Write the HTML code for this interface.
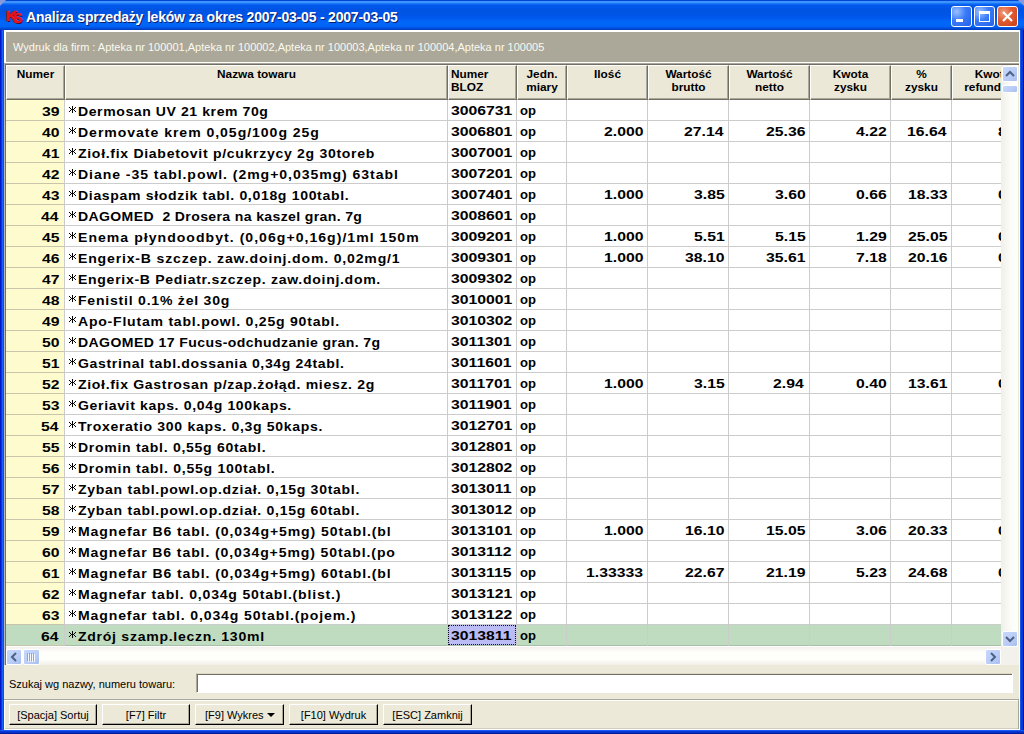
<!DOCTYPE html>
<html><head><meta charset="utf-8">
<style>
*{margin:0;padding:0;box-sizing:border-box}
html,body{width:1024px;height:734px;overflow:hidden;background:#0054E3}
body{position:relative;font-family:"Liberation Sans",sans-serif}
.a{position:absolute}
.t{position:absolute;white-space:pre}
.g{font-size:13px;font-weight:bold;color:#000;line-height:13px}
.gs{display:inline-block;transform:scaleX(1.2);transform-origin:0 0}
.gr{display:inline-block;transform:scaleX(1.2);transform-origin:100% 0}
.h{font-size:11px;font-weight:bold;color:#000;line-height:13px}
.n{font-size:11px;color:#000;line-height:13px}
</style></head><body>

<div class="a" style="left:0;top:0;width:1024px;height:30px;background:linear-gradient(to bottom,#0346D6 0px,#0346D6 1px,#3D95FF 1px,#3D95FF 2px,#3A93FF 2px,#3A93FF 3px,#1C76F8 3px,#1C76F8 4px,#0A64F0 4px,#0A64F0 5px,#0058EE 5px,#0058EE 6px,#0057EA 6px,#0057EA 7px,#0057EA 7px,#0057EA 8px,#0054E3 8px,#0054E3 9px,#0054E3 9px,#0054E3 10px,#0054E3 10px,#0054E3 11px,#0054E3 11px,#0054E3 12px,#0054E3 12px,#0054E3 13px,#0054E3 13px,#0054E3 14px,#0055E8 14px,#0055E8 15px,#0055E8 15px,#0055E8 16px,#0056EA 16px,#0056EA 17px,#0058EC 17px,#0058EC 18px,#005AEE 18px,#005AEE 19px,#005EF2 19px,#005EF2 20px,#0062F5 20px,#0062F5 21px,#0066F8 21px,#0066F8 22px,#0066F8 22px,#0066F8 23px,#0066F8 23px,#0066F8 24px,#0066F8 24px,#0066F8 25px,#0065F7 25px,#0065F7 26px,#0062F4 26px,#0062F4 27px,#0058E8 27px,#0058E8 28px,#004CD8 28px,#004CD8 29px,#003FC0 29px,#003FC0 30px)"></div>
<div class="a" style="left:0;top:30px;width:4px;height:704px;background:linear-gradient(to right,#0018C8 0,#0018C8 1px,#0838E0 1px,#0838E0 2px,#1A60F8 2px,#1A60F8 3px,#1050C8 3px)"></div>
<div class="a" style="left:1020px;top:30px;width:4px;height:704px;background:linear-gradient(to right,#1656E6 0,#1656E6 1px,#0838D8 1px,#0838D8 3px,#001090 3px)"></div>
<div class="a" style="left:0;top:730px;width:1024px;height:4px;background:linear-gradient(to bottom,#1A5AF0 0,#1A5AF0 1px,#0838D8 1px,#0838D8 2px,#0630C8 2px,#0630C8 3px,#001C9C 3px)"></div>
<div class="a" style="left:0;top:0;width:6px;height:6px;background:#8898DC;clip-path:polygon(0 0,100% 0,0 100%)"></div>
<div class="a" style="left:1018px;top:0;width:6px;height:6px;background:#8898DC;clip-path:polygon(0 0,100% 0,100% 100%)"></div>
<svg class="a" style="left:4px;top:8px" width="22" height="18"><g font-family="Liberation Sans" font-weight="bold" font-size="14" fill="#E8141B" stroke-linejoin="round"><g transform="translate(1,1)" fill="#1A0A30"><text x="1.5" y="12.5" transform="scale(1.15,1)">K</text><text x="9" y="14.5" transform="scale(1,1.05)">S</text></g><g stroke="#E8141B" stroke-width="0.7"><text x="1.5" y="12.5" transform="scale(1.15,1)">K</text><text x="9" y="14.5" transform="scale(1,1.05)">S</text></g></g></svg>
<div class="t" style="left:26px;top:9px;font:bold 14px/16px 'Liberation Sans',sans-serif;color:#fff;letter-spacing:-0.2px;text-shadow:1px 1px 0 #0A1E6E">Analiza sprzedaży leków za okres 2007-03-05 - 2007-03-05</div>
<div class="a" style="left:951px;top:6px;width:21px;height:21px;border:1px solid #fff;border-radius:3px;background:radial-gradient(circle at 25% 25%,#9CC0FF 0,#3A7BF8 45%,#2260E8 100%)">
<div class="a" style="left:4px;top:12px;width:7px;height:3px;background:#fff"></div>
</div>
<div class="a" style="left:974px;top:6px;width:21px;height:21px;border:1px solid #fff;border-radius:3px;background:radial-gradient(circle at 25% 25%,#9CC0FF 0,#3A7BF8 45%,#2260E8 100%)">
<div class="a" style="left:4px;top:4px;width:11px;height:11px;border:1px solid #fff;border-top:3px solid #fff"></div>
</div>
<div class="a" style="left:997px;top:6px;width:21px;height:21px;border:1px solid #fff;border-radius:3px;background:radial-gradient(circle at 30% 30%,#F0A080 0,#E25A30 45%,#C8401A 100%)">
<svg class="a" style="left:3px;top:3px" width="13" height="13"><path d="M2 2L11 11M11 2L2 11" stroke="#fff" stroke-width="2.2"/></svg>
</div>
<div class="a" style="left:4px;top:30px;width:1016px;height:700px;background:#ECE9D8"></div>
<div class="a" style="left:4px;top:30px;width:1016px;height:33px;background:#ACA899;border-top:2px solid #fff;border-left:2px solid #fff;border-bottom:1px solid #fff;border-right:1px solid #fff"></div>
<div class="t n" style="left:13px;top:41px;color:#FAFAF0">Wydruk dla firm : Apteka nr 100001,Apteka nr 100002,Apteka nr 100003,Apteka nr 100004,Apteka nr 100005</div>
<div class="a" style="left:4px;top:63px;width:1015px;height:602px;background:#fff;border-top:1px solid #ACA899;border-left:1px solid #B4B8C0"></div>
<div class="a" style="left:5px;top:64px;width:1014px;height:601px;border-top:1px solid #716F64;border-left:1px solid #716F64"></div>
<div class="a" style="left:6px;top:65px;width:995px;height:581px;overflow:hidden">
<div class="a" style="left:0px;top:0;width:59px;height:35px;background:#EBE8D8;border-top:1px solid #fff;border-left:1px solid #fff;border-right:1px solid #716F64;border-bottom:1px solid #716F64;box-shadow:inset -1px -1px 0 #ACA899"></div>
<div class="t h" style="left:0px;top:3px;width:59px;text-align:center;transform:scaleX(1.075)">Numer</div>
<div class="a" style="left:59px;top:0;width:383px;height:35px;background:#EBE8D8;border-top:1px solid #fff;border-left:1px solid #fff;border-right:1px solid #716F64;border-bottom:1px solid #716F64;box-shadow:inset -1px -1px 0 #ACA899"></div>
<div class="t h" style="left:59px;top:3px;width:383px;text-align:center;transform:scaleX(1.075)">Nazwa towaru</div>
<div class="a" style="left:442px;top:0;width:69px;height:35px;background:#EBE8D8;border-top:1px solid #fff;border-left:1px solid #fff;border-right:1px solid #716F64;border-bottom:1px solid #716F64;box-shadow:inset -1px -1px 0 #ACA899"></div>
<div class="t h" style="left:445px;top:3px;transform:scaleX(1.075);transform-origin:0 0">Numer<br>BLOZ</div>
<div class="a" style="left:511px;top:0;width:50px;height:35px;background:#EBE8D8;border-top:1px solid #fff;border-left:1px solid #fff;border-right:1px solid #716F64;border-bottom:1px solid #716F64;box-shadow:inset -1px -1px 0 #ACA899"></div>
<div class="t h" style="left:511px;top:3px;width:50px;text-align:center;transform:scaleX(1.075)">Jedn.<br>miary</div>
<div class="a" style="left:561px;top:0;width:81px;height:35px;background:#EBE8D8;border-top:1px solid #fff;border-left:1px solid #fff;border-right:1px solid #716F64;border-bottom:1px solid #716F64;box-shadow:inset -1px -1px 0 #ACA899"></div>
<div class="t h" style="left:561px;top:3px;width:81px;text-align:center;transform:scaleX(1.075)">Ilość</div>
<div class="a" style="left:642px;top:0;width:81px;height:35px;background:#EBE8D8;border-top:1px solid #fff;border-left:1px solid #fff;border-right:1px solid #716F64;border-bottom:1px solid #716F64;box-shadow:inset -1px -1px 0 #ACA899"></div>
<div class="t h" style="left:642px;top:3px;width:81px;text-align:center;transform:scaleX(1.075)">Wartość<br>brutto</div>
<div class="a" style="left:723px;top:0;width:81px;height:35px;background:#EBE8D8;border-top:1px solid #fff;border-left:1px solid #fff;border-right:1px solid #716F64;border-bottom:1px solid #716F64;box-shadow:inset -1px -1px 0 #ACA899"></div>
<div class="t h" style="left:723px;top:3px;width:81px;text-align:center;transform:scaleX(1.075)">Wartość<br>netto</div>
<div class="a" style="left:804px;top:0;width:81px;height:35px;background:#EBE8D8;border-top:1px solid #fff;border-left:1px solid #fff;border-right:1px solid #716F64;border-bottom:1px solid #716F64;box-shadow:inset -1px -1px 0 #ACA899"></div>
<div class="t h" style="left:804px;top:3px;width:81px;text-align:center;transform:scaleX(1.075)">Kwota<br>zysku</div>
<div class="a" style="left:885px;top:0;width:61px;height:35px;background:#EBE8D8;border-top:1px solid #fff;border-left:1px solid #fff;border-right:1px solid #716F64;border-bottom:1px solid #716F64;box-shadow:inset -1px -1px 0 #ACA899"></div>
<div class="t h" style="left:885px;top:3px;width:61px;text-align:center;transform:scaleX(1.075)">%<br>zysku</div>
<div class="a" style="left:946px;top:0;width:81px;height:35px;background:#EBE8D8;border-top:1px solid #fff;border-left:1px solid #fff;border-right:1px solid #716F64;border-bottom:1px solid #716F64;box-shadow:inset -1px -1px 0 #ACA899"></div>
<div class="t h" style="left:946px;top:3px;width:81px;text-align:center;transform:scaleX(1.075)">Kwota<br>refundacji</div>
<div class="a" style="left:0px;top:35px;width:58px;height:20px;background:#FEFCCE"></div>
<div class="a" style="left:59px;top:35px;width:1000px;height:20px;background:#fff"></div>
<div class="a" style="left:0px;top:55px;width:58px;height:1px;background:#C8C5AA"></div>
<div class="a" style="left:59px;top:55px;width:1000px;height:1px;background:#CCCCCC"></div>
<div class="t g" style="left:35.77px;top:40px;transform:scaleX(1.2108);transform-origin:0 0">39</div>
<div class="t g" style="left:72.00px;top:40px;letter-spacing:0.538px;transform:scaleX(1.0800);transform-origin:0 0">Dermosan UV 21 krem 70g</div>
<div class="t g" style="left:445.00px;top:39px;transform:scaleX(1.2108);transform-origin:0 0">3006731</div>
<div class="t g" style="left:514.00px;top:39px;transform:scaleX(1.0037);transform-origin:0 0">op</div>
<div class="a" style="left:0px;top:56px;width:58px;height:20px;background:#FEFCCE"></div>
<div class="a" style="left:59px;top:56px;width:1000px;height:20px;background:#fff"></div>
<div class="a" style="left:0px;top:76px;width:58px;height:1px;background:#C8C5AA"></div>
<div class="a" style="left:59px;top:76px;width:1000px;height:1px;background:#CCCCCC"></div>
<div class="t g" style="left:35.77px;top:61px;transform:scaleX(1.2108);transform-origin:0 0">40</div>
<div class="t g" style="left:72.00px;top:61px;letter-spacing:0.896px;transform:scaleX(1.0800);transform-origin:0 0">Dermovate krem 0,05g/100g 25g</div>
<div class="t g" style="left:445.00px;top:60px;transform:scaleX(1.2108);transform-origin:0 0">3006801</div>
<div class="t g" style="left:514.00px;top:60px;transform:scaleX(1.0037);transform-origin:0 0">op</div>
<div class="t g" style="left:597.89px;top:60px;transform:scaleX(1.2108);transform-origin:0 0">2.000</div>
<div class="t g" style="left:677.68px;top:60px;transform:scaleX(1.2108);transform-origin:0 0">27.14</div>
<div class="t g" style="left:759.89px;top:60px;transform:scaleX(1.2108);transform-origin:0 0">25.36</div>
<div class="t g" style="left:849.64px;top:60px;transform:scaleX(1.2108);transform-origin:0 0">4.22</div>
<div class="t g" style="left:900.68px;top:60px;transform:scaleX(1.2108);transform-origin:0 0">16.64</div>
<div class="t g" style="left:992.00px;top:60px;transform:scaleX(1.2108);transform-origin:0 0">8.00</div>
<div class="a" style="left:0px;top:77px;width:58px;height:20px;background:#FEFCCE"></div>
<div class="a" style="left:59px;top:77px;width:1000px;height:20px;background:#fff"></div>
<div class="a" style="left:0px;top:97px;width:58px;height:1px;background:#C8C5AA"></div>
<div class="a" style="left:59px;top:97px;width:1000px;height:1px;background:#CCCCCC"></div>
<div class="t g" style="left:35.77px;top:82px;transform:scaleX(1.2108);transform-origin:0 0">41</div>
<div class="t g" style="left:72.00px;top:82px;letter-spacing:0.647px;transform:scaleX(1.0800);transform-origin:0 0">Zioł.fix Diabetovit p/cukrzycy 2g 30toreb</div>
<div class="t g" style="left:445.00px;top:81px;transform:scaleX(1.2108);transform-origin:0 0">3007001</div>
<div class="t g" style="left:514.00px;top:81px;transform:scaleX(1.0037);transform-origin:0 0">op</div>
<div class="a" style="left:0px;top:98px;width:58px;height:20px;background:#FEFCCE"></div>
<div class="a" style="left:59px;top:98px;width:1000px;height:20px;background:#fff"></div>
<div class="a" style="left:0px;top:118px;width:58px;height:1px;background:#C8C5AA"></div>
<div class="a" style="left:59px;top:118px;width:1000px;height:1px;background:#CCCCCC"></div>
<div class="t g" style="left:35.77px;top:103px;transform:scaleX(1.2108);transform-origin:0 0">42</div>
<div class="t g" style="left:72.00px;top:103px;letter-spacing:0.875px;transform:scaleX(1.0800);transform-origin:0 0">Diane -35 tabl.powl. (2mg+0,035mg) 63tabl</div>
<div class="t g" style="left:445.00px;top:102px;transform:scaleX(1.2108);transform-origin:0 0">3007201</div>
<div class="t g" style="left:514.00px;top:102px;transform:scaleX(1.0037);transform-origin:0 0">op</div>
<div class="a" style="left:0px;top:119px;width:58px;height:20px;background:#FEFCCE"></div>
<div class="a" style="left:59px;top:119px;width:1000px;height:20px;background:#fff"></div>
<div class="a" style="left:0px;top:139px;width:58px;height:1px;background:#C8C5AA"></div>
<div class="a" style="left:59px;top:139px;width:1000px;height:1px;background:#CCCCCC"></div>
<div class="t g" style="left:35.77px;top:124px;transform:scaleX(1.2108);transform-origin:0 0">43</div>
<div class="t g" style="left:72.00px;top:124px;letter-spacing:0.619px;transform:scaleX(1.0800);transform-origin:0 0">Diaspam słodzik tabl. 0,018g 100tabl.</div>
<div class="t g" style="left:445.00px;top:123px;transform:scaleX(1.2108);transform-origin:0 0">3007401</div>
<div class="t g" style="left:514.00px;top:123px;transform:scaleX(1.0037);transform-origin:0 0">op</div>
<div class="t g" style="left:597.89px;top:123px;transform:scaleX(1.2108);transform-origin:0 0">1.000</div>
<div class="t g" style="left:687.64px;top:123px;transform:scaleX(1.2108);transform-origin:0 0">3.85</div>
<div class="t g" style="left:768.64px;top:123px;transform:scaleX(1.2108);transform-origin:0 0">3.60</div>
<div class="t g" style="left:849.64px;top:123px;transform:scaleX(1.2108);transform-origin:0 0">0.66</div>
<div class="t g" style="left:901.89px;top:123px;transform:scaleX(1.2108);transform-origin:0 0">18.33</div>
<div class="t g" style="left:992.00px;top:123px;transform:scaleX(1.2108);transform-origin:0 0">0.00</div>
<div class="a" style="left:0px;top:140px;width:58px;height:20px;background:#FEFCCE"></div>
<div class="a" style="left:59px;top:140px;width:1000px;height:20px;background:#fff"></div>
<div class="a" style="left:0px;top:160px;width:58px;height:1px;background:#C8C5AA"></div>
<div class="a" style="left:59px;top:160px;width:1000px;height:1px;background:#CCCCCC"></div>
<div class="t g" style="left:34.56px;top:145px;transform:scaleX(1.2108);transform-origin:0 0">44</div>
<div class="t g" style="left:72.00px;top:145px;letter-spacing:0.339px;transform:scaleX(1.0800);transform-origin:0 0">DAGOMED  2 Drosera na kaszel gran. 7g</div>
<div class="t g" style="left:445.00px;top:144px;transform:scaleX(1.2108);transform-origin:0 0">3008601</div>
<div class="t g" style="left:514.00px;top:144px;transform:scaleX(1.0037);transform-origin:0 0">op</div>
<div class="a" style="left:0px;top:161px;width:58px;height:20px;background:#FEFCCE"></div>
<div class="a" style="left:59px;top:161px;width:1000px;height:20px;background:#fff"></div>
<div class="a" style="left:0px;top:181px;width:58px;height:1px;background:#C8C5AA"></div>
<div class="a" style="left:59px;top:181px;width:1000px;height:1px;background:#CCCCCC"></div>
<div class="t g" style="left:35.77px;top:166px;transform:scaleX(1.2108);transform-origin:0 0">45</div>
<div class="t g" style="left:72.00px;top:166px;letter-spacing:0.958px;transform:scaleX(1.0800);transform-origin:0 0">Enema płyndoodbyt. (0,06g+0,16g)/1ml 150m</div>
<div class="t g" style="left:445.00px;top:165px;transform:scaleX(1.2108);transform-origin:0 0">3009201</div>
<div class="t g" style="left:514.00px;top:165px;transform:scaleX(1.0037);transform-origin:0 0">op</div>
<div class="t g" style="left:597.89px;top:165px;transform:scaleX(1.2108);transform-origin:0 0">1.000</div>
<div class="t g" style="left:687.64px;top:165px;transform:scaleX(1.2108);transform-origin:0 0">5.51</div>
<div class="t g" style="left:768.64px;top:165px;transform:scaleX(1.2108);transform-origin:0 0">5.15</div>
<div class="t g" style="left:849.64px;top:165px;transform:scaleX(1.2108);transform-origin:0 0">1.29</div>
<div class="t g" style="left:901.89px;top:165px;transform:scaleX(1.2108);transform-origin:0 0">25.05</div>
<div class="t g" style="left:992.00px;top:165px;transform:scaleX(1.2108);transform-origin:0 0">0.00</div>
<div class="a" style="left:0px;top:182px;width:58px;height:20px;background:#FEFCCE"></div>
<div class="a" style="left:59px;top:182px;width:1000px;height:20px;background:#fff"></div>
<div class="a" style="left:0px;top:202px;width:58px;height:1px;background:#C8C5AA"></div>
<div class="a" style="left:59px;top:202px;width:1000px;height:1px;background:#CCCCCC"></div>
<div class="t g" style="left:35.77px;top:187px;transform:scaleX(1.2108);transform-origin:0 0">46</div>
<div class="t g" style="left:72.00px;top:187px;letter-spacing:0.775px;transform:scaleX(1.0800);transform-origin:0 0">Engerix-B szczep. zaw.doinj.dom. 0,02mg/1</div>
<div class="t g" style="left:445.00px;top:186px;transform:scaleX(1.2108);transform-origin:0 0">3009301</div>
<div class="t g" style="left:514.00px;top:186px;transform:scaleX(1.0037);transform-origin:0 0">op</div>
<div class="t g" style="left:597.89px;top:186px;transform:scaleX(1.2108);transform-origin:0 0">1.000</div>
<div class="t g" style="left:678.89px;top:186px;transform:scaleX(1.2108);transform-origin:0 0">38.10</div>
<div class="t g" style="left:759.89px;top:186px;transform:scaleX(1.2108);transform-origin:0 0">35.61</div>
<div class="t g" style="left:849.64px;top:186px;transform:scaleX(1.2108);transform-origin:0 0">7.18</div>
<div class="t g" style="left:901.89px;top:186px;transform:scaleX(1.2108);transform-origin:0 0">20.16</div>
<div class="t g" style="left:992.00px;top:186px;transform:scaleX(1.2108);transform-origin:0 0">0.00</div>
<div class="a" style="left:0px;top:203px;width:58px;height:20px;background:#FEFCCE"></div>
<div class="a" style="left:59px;top:203px;width:1000px;height:20px;background:#fff"></div>
<div class="a" style="left:0px;top:223px;width:58px;height:1px;background:#C8C5AA"></div>
<div class="a" style="left:59px;top:223px;width:1000px;height:1px;background:#CCCCCC"></div>
<div class="t g" style="left:35.77px;top:208px;transform:scaleX(1.2108);transform-origin:0 0">47</div>
<div class="t g" style="left:72.00px;top:208px;letter-spacing:0.650px;transform:scaleX(1.0800);transform-origin:0 0">Engerix-B Pediatr.szczep. zaw.doinj.dom.</div>
<div class="t g" style="left:445.00px;top:207px;transform:scaleX(1.2108);transform-origin:0 0">3009302</div>
<div class="t g" style="left:514.00px;top:207px;transform:scaleX(1.0037);transform-origin:0 0">op</div>
<div class="a" style="left:0px;top:224px;width:58px;height:20px;background:#FEFCCE"></div>
<div class="a" style="left:59px;top:224px;width:1000px;height:20px;background:#fff"></div>
<div class="a" style="left:0px;top:244px;width:58px;height:1px;background:#C8C5AA"></div>
<div class="a" style="left:59px;top:244px;width:1000px;height:1px;background:#CCCCCC"></div>
<div class="t g" style="left:35.77px;top:229px;transform:scaleX(1.2108);transform-origin:0 0">48</div>
<div class="t g" style="left:72.00px;top:229px;letter-spacing:0.721px;transform:scaleX(1.0800);transform-origin:0 0">Fenistil 0.1% żel 30g</div>
<div class="t g" style="left:445.00px;top:228px;transform:scaleX(1.2108);transform-origin:0 0">3010001</div>
<div class="t g" style="left:514.00px;top:228px;transform:scaleX(1.0037);transform-origin:0 0">op</div>
<div class="a" style="left:0px;top:245px;width:58px;height:20px;background:#FEFCCE"></div>
<div class="a" style="left:59px;top:245px;width:1000px;height:20px;background:#fff"></div>
<div class="a" style="left:0px;top:265px;width:58px;height:1px;background:#C8C5AA"></div>
<div class="a" style="left:59px;top:265px;width:1000px;height:1px;background:#CCCCCC"></div>
<div class="t g" style="left:35.77px;top:250px;transform:scaleX(1.2108);transform-origin:0 0">49</div>
<div class="t g" style="left:72.00px;top:250px;letter-spacing:0.718px;transform:scaleX(1.0800);transform-origin:0 0">Apo-Flutam tabl.powl. 0,25g 90tabl.</div>
<div class="t g" style="left:445.00px;top:249px;transform:scaleX(1.2108);transform-origin:0 0">3010302</div>
<div class="t g" style="left:514.00px;top:249px;transform:scaleX(1.0037);transform-origin:0 0">op</div>
<div class="a" style="left:0px;top:266px;width:58px;height:20px;background:#FEFCCE"></div>
<div class="a" style="left:59px;top:266px;width:1000px;height:20px;background:#fff"></div>
<div class="a" style="left:0px;top:286px;width:58px;height:1px;background:#C8C5AA"></div>
<div class="a" style="left:59px;top:286px;width:1000px;height:1px;background:#CCCCCC"></div>
<div class="t g" style="left:35.77px;top:271px;transform:scaleX(1.2108);transform-origin:0 0">50</div>
<div class="t g" style="left:72.00px;top:271px;letter-spacing:0.387px;transform:scaleX(1.0800);transform-origin:0 0">DAGOMED 17 Fucus-odchudzanie gran. 7g</div>
<div class="t g" style="left:445.00px;top:270px;transform:scaleX(1.2108);transform-origin:0 0">3011301</div>
<div class="t g" style="left:514.00px;top:270px;transform:scaleX(1.0037);transform-origin:0 0">op</div>
<div class="a" style="left:0px;top:287px;width:58px;height:20px;background:#FEFCCE"></div>
<div class="a" style="left:59px;top:287px;width:1000px;height:20px;background:#fff"></div>
<div class="a" style="left:0px;top:307px;width:58px;height:1px;background:#C8C5AA"></div>
<div class="a" style="left:59px;top:307px;width:1000px;height:1px;background:#CCCCCC"></div>
<div class="t g" style="left:35.77px;top:292px;transform:scaleX(1.2108);transform-origin:0 0">51</div>
<div class="t g" style="left:72.00px;top:292px;letter-spacing:0.599px;transform:scaleX(1.0800);transform-origin:0 0">Gastrinal tabl.dossania 0,34g 24tabl.</div>
<div class="t g" style="left:445.00px;top:291px;transform:scaleX(1.2108);transform-origin:0 0">3011601</div>
<div class="t g" style="left:514.00px;top:291px;transform:scaleX(1.0037);transform-origin:0 0">op</div>
<div class="a" style="left:0px;top:308px;width:58px;height:20px;background:#FEFCCE"></div>
<div class="a" style="left:59px;top:308px;width:1000px;height:20px;background:#fff"></div>
<div class="a" style="left:0px;top:328px;width:58px;height:1px;background:#C8C5AA"></div>
<div class="a" style="left:59px;top:328px;width:1000px;height:1px;background:#CCCCCC"></div>
<div class="t g" style="left:35.77px;top:313px;transform:scaleX(1.2108);transform-origin:0 0">52</div>
<div class="t g" style="left:72.00px;top:313px;letter-spacing:0.629px;transform:scaleX(1.0800);transform-origin:0 0">Zioł.fix Gastrosan p/zap.żołąd. miesz. 2g</div>
<div class="t g" style="left:445.00px;top:312px;transform:scaleX(1.2108);transform-origin:0 0">3011701</div>
<div class="t g" style="left:514.00px;top:312px;transform:scaleX(1.0037);transform-origin:0 0">op</div>
<div class="t g" style="left:597.89px;top:312px;transform:scaleX(1.2108);transform-origin:0 0">1.000</div>
<div class="t g" style="left:687.64px;top:312px;transform:scaleX(1.2108);transform-origin:0 0">3.15</div>
<div class="t g" style="left:767.43px;top:312px;transform:scaleX(1.2108);transform-origin:0 0">2.94</div>
<div class="t g" style="left:849.64px;top:312px;transform:scaleX(1.2108);transform-origin:0 0">0.40</div>
<div class="t g" style="left:901.89px;top:312px;transform:scaleX(1.2108);transform-origin:0 0">13.61</div>
<div class="t g" style="left:992.00px;top:312px;transform:scaleX(1.2108);transform-origin:0 0">0.00</div>
<div class="a" style="left:0px;top:329px;width:58px;height:20px;background:#FEFCCE"></div>
<div class="a" style="left:59px;top:329px;width:1000px;height:20px;background:#fff"></div>
<div class="a" style="left:0px;top:349px;width:58px;height:1px;background:#C8C5AA"></div>
<div class="a" style="left:59px;top:349px;width:1000px;height:1px;background:#CCCCCC"></div>
<div class="t g" style="left:35.77px;top:334px;transform:scaleX(1.2108);transform-origin:0 0">53</div>
<div class="t g" style="left:72.00px;top:334px;letter-spacing:0.600px;transform:scaleX(1.0800);transform-origin:0 0">Geriavit kaps. 0,04g 100kaps.</div>
<div class="t g" style="left:445.00px;top:333px;transform:scaleX(1.2108);transform-origin:0 0">3011901</div>
<div class="t g" style="left:514.00px;top:333px;transform:scaleX(1.0037);transform-origin:0 0">op</div>
<div class="a" style="left:0px;top:350px;width:58px;height:20px;background:#FEFCCE"></div>
<div class="a" style="left:59px;top:350px;width:1000px;height:20px;background:#fff"></div>
<div class="a" style="left:0px;top:370px;width:58px;height:1px;background:#C8C5AA"></div>
<div class="a" style="left:59px;top:370px;width:1000px;height:1px;background:#CCCCCC"></div>
<div class="t g" style="left:34.56px;top:355px;transform:scaleX(1.2108);transform-origin:0 0">54</div>
<div class="t g" style="left:72.00px;top:355px;letter-spacing:0.638px;transform:scaleX(1.0800);transform-origin:0 0">Troxeratio 300 kaps. 0,3g 50kaps.</div>
<div class="t g" style="left:445.00px;top:354px;transform:scaleX(1.2108);transform-origin:0 0">3012701</div>
<div class="t g" style="left:514.00px;top:354px;transform:scaleX(1.0037);transform-origin:0 0">op</div>
<div class="a" style="left:0px;top:371px;width:58px;height:20px;background:#FEFCCE"></div>
<div class="a" style="left:59px;top:371px;width:1000px;height:20px;background:#fff"></div>
<div class="a" style="left:0px;top:391px;width:58px;height:1px;background:#C8C5AA"></div>
<div class="a" style="left:59px;top:391px;width:1000px;height:1px;background:#CCCCCC"></div>
<div class="t g" style="left:35.77px;top:376px;transform:scaleX(1.2108);transform-origin:0 0">55</div>
<div class="t g" style="left:72.00px;top:376px;letter-spacing:0.647px;transform:scaleX(1.0800);transform-origin:0 0">Dromin tabl. 0,55g 60tabl.</div>
<div class="t g" style="left:445.00px;top:375px;transform:scaleX(1.2108);transform-origin:0 0">3012801</div>
<div class="t g" style="left:514.00px;top:375px;transform:scaleX(1.0037);transform-origin:0 0">op</div>
<div class="a" style="left:0px;top:392px;width:58px;height:20px;background:#FEFCCE"></div>
<div class="a" style="left:59px;top:392px;width:1000px;height:20px;background:#fff"></div>
<div class="a" style="left:0px;top:412px;width:58px;height:1px;background:#C8C5AA"></div>
<div class="a" style="left:59px;top:412px;width:1000px;height:1px;background:#CCCCCC"></div>
<div class="t g" style="left:35.77px;top:397px;transform:scaleX(1.2108);transform-origin:0 0">56</div>
<div class="t g" style="left:72.00px;top:397px;letter-spacing:0.672px;transform:scaleX(1.0800);transform-origin:0 0">Dromin tabl. 0,55g 100tabl.</div>
<div class="t g" style="left:445.00px;top:396px;transform:scaleX(1.2108);transform-origin:0 0">3012802</div>
<div class="t g" style="left:514.00px;top:396px;transform:scaleX(1.0037);transform-origin:0 0">op</div>
<div class="a" style="left:0px;top:413px;width:58px;height:20px;background:#FEFCCE"></div>
<div class="a" style="left:59px;top:413px;width:1000px;height:20px;background:#fff"></div>
<div class="a" style="left:0px;top:433px;width:58px;height:1px;background:#C8C5AA"></div>
<div class="a" style="left:59px;top:433px;width:1000px;height:1px;background:#CCCCCC"></div>
<div class="t g" style="left:35.77px;top:418px;transform:scaleX(1.2108);transform-origin:0 0">57</div>
<div class="t g" style="left:72.00px;top:418px;letter-spacing:0.659px;transform:scaleX(1.0800);transform-origin:0 0">Zyban tabl.powl.op.dział. 0,15g 30tabl.</div>
<div class="t g" style="left:445.00px;top:417px;transform:scaleX(1.2108);transform-origin:0 0">3013011</div>
<div class="t g" style="left:514.00px;top:417px;transform:scaleX(1.0037);transform-origin:0 0">op</div>
<div class="a" style="left:0px;top:434px;width:58px;height:20px;background:#FEFCCE"></div>
<div class="a" style="left:59px;top:434px;width:1000px;height:20px;background:#fff"></div>
<div class="a" style="left:0px;top:454px;width:58px;height:1px;background:#C8C5AA"></div>
<div class="a" style="left:59px;top:454px;width:1000px;height:1px;background:#CCCCCC"></div>
<div class="t g" style="left:35.77px;top:439px;transform:scaleX(1.2108);transform-origin:0 0">58</div>
<div class="t g" style="left:72.00px;top:439px;letter-spacing:0.659px;transform:scaleX(1.0800);transform-origin:0 0">Zyban tabl.powl.op.dział. 0,15g 60tabl.</div>
<div class="t g" style="left:445.00px;top:438px;transform:scaleX(1.2108);transform-origin:0 0">3013012</div>
<div class="t g" style="left:514.00px;top:438px;transform:scaleX(1.0037);transform-origin:0 0">op</div>
<div class="a" style="left:0px;top:455px;width:58px;height:20px;background:#FEFCCE"></div>
<div class="a" style="left:59px;top:455px;width:1000px;height:20px;background:#fff"></div>
<div class="a" style="left:0px;top:475px;width:58px;height:1px;background:#C8C5AA"></div>
<div class="a" style="left:59px;top:475px;width:1000px;height:1px;background:#CCCCCC"></div>
<div class="t g" style="left:35.77px;top:460px;transform:scaleX(1.2108);transform-origin:0 0">59</div>
<div class="t g" style="left:72.00px;top:460px;letter-spacing:0.837px;transform:scaleX(1.0800);transform-origin:0 0">Magnefar B6 tabl. (0,034g+5mg) 50tabl.(bl</div>
<div class="t g" style="left:445.00px;top:459px;transform:scaleX(1.2108);transform-origin:0 0">3013101</div>
<div class="t g" style="left:514.00px;top:459px;transform:scaleX(1.0037);transform-origin:0 0">op</div>
<div class="t g" style="left:597.89px;top:459px;transform:scaleX(1.2108);transform-origin:0 0">1.000</div>
<div class="t g" style="left:678.89px;top:459px;transform:scaleX(1.2108);transform-origin:0 0">16.10</div>
<div class="t g" style="left:759.89px;top:459px;transform:scaleX(1.2108);transform-origin:0 0">15.05</div>
<div class="t g" style="left:849.64px;top:459px;transform:scaleX(1.2108);transform-origin:0 0">3.06</div>
<div class="t g" style="left:901.89px;top:459px;transform:scaleX(1.2108);transform-origin:0 0">20.33</div>
<div class="t g" style="left:992.00px;top:459px;transform:scaleX(1.2108);transform-origin:0 0">0.00</div>
<div class="a" style="left:0px;top:476px;width:58px;height:20px;background:#FEFCCE"></div>
<div class="a" style="left:59px;top:476px;width:1000px;height:20px;background:#fff"></div>
<div class="a" style="left:0px;top:496px;width:58px;height:1px;background:#C8C5AA"></div>
<div class="a" style="left:59px;top:496px;width:1000px;height:1px;background:#CCCCCC"></div>
<div class="t g" style="left:35.77px;top:481px;transform:scaleX(1.2108);transform-origin:0 0">60</div>
<div class="t g" style="left:72.00px;top:481px;letter-spacing:0.826px;transform:scaleX(1.0800);transform-origin:0 0">Magnefar B6 tabl. (0,034g+5mg) 50tabl.(po</div>
<div class="t g" style="left:445.00px;top:480px;transform:scaleX(1.2108);transform-origin:0 0">3013112</div>
<div class="t g" style="left:514.00px;top:480px;transform:scaleX(1.0037);transform-origin:0 0">op</div>
<div class="a" style="left:0px;top:497px;width:58px;height:20px;background:#FEFCCE"></div>
<div class="a" style="left:59px;top:497px;width:1000px;height:20px;background:#fff"></div>
<div class="a" style="left:0px;top:517px;width:58px;height:1px;background:#C8C5AA"></div>
<div class="a" style="left:59px;top:517px;width:1000px;height:1px;background:#CCCCCC"></div>
<div class="t g" style="left:35.77px;top:502px;transform:scaleX(1.2108);transform-origin:0 0">61</div>
<div class="t g" style="left:72.00px;top:502px;letter-spacing:0.837px;transform:scaleX(1.0800);transform-origin:0 0">Magnefar B6 tabl. (0,034g+5mg) 60tabl.(bl</div>
<div class="t g" style="left:445.00px;top:501px;transform:scaleX(1.2108);transform-origin:0 0">3013115</div>
<div class="t g" style="left:514.00px;top:501px;transform:scaleX(1.0037);transform-origin:0 0">op</div>
<div class="t g" style="left:580.38px;top:501px;transform:scaleX(1.2108);transform-origin:0 0">1.33333</div>
<div class="t g" style="left:678.89px;top:501px;transform:scaleX(1.2108);transform-origin:0 0">22.67</div>
<div class="t g" style="left:759.89px;top:501px;transform:scaleX(1.2108);transform-origin:0 0">21.19</div>
<div class="t g" style="left:849.64px;top:501px;transform:scaleX(1.2108);transform-origin:0 0">5.23</div>
<div class="t g" style="left:901.89px;top:501px;transform:scaleX(1.2108);transform-origin:0 0">24.68</div>
<div class="t g" style="left:992.00px;top:501px;transform:scaleX(1.2108);transform-origin:0 0">0.00</div>
<div class="a" style="left:0px;top:518px;width:58px;height:20px;background:#FEFCCE"></div>
<div class="a" style="left:59px;top:518px;width:1000px;height:20px;background:#fff"></div>
<div class="a" style="left:0px;top:538px;width:58px;height:1px;background:#C8C5AA"></div>
<div class="a" style="left:59px;top:538px;width:1000px;height:1px;background:#CCCCCC"></div>
<div class="t g" style="left:35.77px;top:523px;transform:scaleX(1.2108);transform-origin:0 0">62</div>
<div class="t g" style="left:72.00px;top:523px;letter-spacing:0.748px;transform:scaleX(1.0800);transform-origin:0 0">Magnefar tabl. 0,034g 50tabl.(blist.)</div>
<div class="t g" style="left:445.00px;top:522px;transform:scaleX(1.2108);transform-origin:0 0">3013121</div>
<div class="t g" style="left:514.00px;top:522px;transform:scaleX(1.0037);transform-origin:0 0">op</div>
<div class="a" style="left:0px;top:539px;width:58px;height:20px;background:#FEFCCE"></div>
<div class="a" style="left:59px;top:539px;width:1000px;height:20px;background:#fff"></div>
<div class="a" style="left:0px;top:559px;width:58px;height:1px;background:#C8C5AA"></div>
<div class="a" style="left:59px;top:559px;width:1000px;height:1px;background:#CCCCCC"></div>
<div class="t g" style="left:35.77px;top:544px;transform:scaleX(1.2108);transform-origin:0 0">63</div>
<div class="t g" style="left:72.00px;top:544px;letter-spacing:0.815px;transform:scaleX(1.0800);transform-origin:0 0">Magnefar tabl. 0,034g 50tabl.(pojem.)</div>
<div class="t g" style="left:445.00px;top:543px;transform:scaleX(1.2108);transform-origin:0 0">3013122</div>
<div class="t g" style="left:514.00px;top:543px;transform:scaleX(1.0037);transform-origin:0 0">op</div>
<div class="a" style="left:0px;top:560px;width:58px;height:20px;background:#C0DCC0"></div>
<div class="a" style="left:59px;top:560px;width:1000px;height:20px;background:#C0DCC0"></div>
<div class="a" style="left:442px;top:560px;width:68px;height:20px;background:#BCBCF4"></div>
<div class="a" style="left:0px;top:580px;width:58px;height:1px;background:#C8C5AA"></div>
<div class="a" style="left:59px;top:580px;width:1000px;height:1px;background:#A8C0A8"></div>
<div class="t g" style="left:34.56px;top:565px;transform:scaleX(1.2108);transform-origin:0 0">64</div>
<div class="t g" style="left:72.00px;top:565px;letter-spacing:0.674px;transform:scaleX(1.0800);transform-origin:0 0">Zdrój szamp.leczn. 130ml</div>
<div class="t g" style="left:445.00px;top:564px;transform:scaleX(1.2108);transform-origin:0 0">3013811</div>
<div class="t g" style="left:514.00px;top:564px;transform:scaleX(1.0037);transform-origin:0 0">op</div>
<svg class="a" style="left:0;top:0" width="995" height="581" shape-rendering="crispEdges"><path d="M66 41h1v7h-1zM63 42h1v1h-1zM64 43h1v1h-1zM65 44h3v1h-3zM68 43h1v1h-1zM69 42h1v1h-1zM63 46h1v1h-1zM64 45h1v1h-1zM68 45h1v1h-1zM69 46h1v1h-1zM66 62h1v7h-1zM63 63h1v1h-1zM64 64h1v1h-1zM65 65h3v1h-3zM68 64h1v1h-1zM69 63h1v1h-1zM63 67h1v1h-1zM64 66h1v1h-1zM68 66h1v1h-1zM69 67h1v1h-1zM66 83h1v7h-1zM63 84h1v1h-1zM64 85h1v1h-1zM65 86h3v1h-3zM68 85h1v1h-1zM69 84h1v1h-1zM63 88h1v1h-1zM64 87h1v1h-1zM68 87h1v1h-1zM69 88h1v1h-1zM66 104h1v7h-1zM63 105h1v1h-1zM64 106h1v1h-1zM65 107h3v1h-3zM68 106h1v1h-1zM69 105h1v1h-1zM63 109h1v1h-1zM64 108h1v1h-1zM68 108h1v1h-1zM69 109h1v1h-1zM66 125h1v7h-1zM63 126h1v1h-1zM64 127h1v1h-1zM65 128h3v1h-3zM68 127h1v1h-1zM69 126h1v1h-1zM63 130h1v1h-1zM64 129h1v1h-1zM68 129h1v1h-1zM69 130h1v1h-1zM66 146h1v7h-1zM63 147h1v1h-1zM64 148h1v1h-1zM65 149h3v1h-3zM68 148h1v1h-1zM69 147h1v1h-1zM63 151h1v1h-1zM64 150h1v1h-1zM68 150h1v1h-1zM69 151h1v1h-1zM66 167h1v7h-1zM63 168h1v1h-1zM64 169h1v1h-1zM65 170h3v1h-3zM68 169h1v1h-1zM69 168h1v1h-1zM63 172h1v1h-1zM64 171h1v1h-1zM68 171h1v1h-1zM69 172h1v1h-1zM66 188h1v7h-1zM63 189h1v1h-1zM64 190h1v1h-1zM65 191h3v1h-3zM68 190h1v1h-1zM69 189h1v1h-1zM63 193h1v1h-1zM64 192h1v1h-1zM68 192h1v1h-1zM69 193h1v1h-1zM66 209h1v7h-1zM63 210h1v1h-1zM64 211h1v1h-1zM65 212h3v1h-3zM68 211h1v1h-1zM69 210h1v1h-1zM63 214h1v1h-1zM64 213h1v1h-1zM68 213h1v1h-1zM69 214h1v1h-1zM66 230h1v7h-1zM63 231h1v1h-1zM64 232h1v1h-1zM65 233h3v1h-3zM68 232h1v1h-1zM69 231h1v1h-1zM63 235h1v1h-1zM64 234h1v1h-1zM68 234h1v1h-1zM69 235h1v1h-1zM66 251h1v7h-1zM63 252h1v1h-1zM64 253h1v1h-1zM65 254h3v1h-3zM68 253h1v1h-1zM69 252h1v1h-1zM63 256h1v1h-1zM64 255h1v1h-1zM68 255h1v1h-1zM69 256h1v1h-1zM66 272h1v7h-1zM63 273h1v1h-1zM64 274h1v1h-1zM65 275h3v1h-3zM68 274h1v1h-1zM69 273h1v1h-1zM63 277h1v1h-1zM64 276h1v1h-1zM68 276h1v1h-1zM69 277h1v1h-1zM66 293h1v7h-1zM63 294h1v1h-1zM64 295h1v1h-1zM65 296h3v1h-3zM68 295h1v1h-1zM69 294h1v1h-1zM63 298h1v1h-1zM64 297h1v1h-1zM68 297h1v1h-1zM69 298h1v1h-1zM66 314h1v7h-1zM63 315h1v1h-1zM64 316h1v1h-1zM65 317h3v1h-3zM68 316h1v1h-1zM69 315h1v1h-1zM63 319h1v1h-1zM64 318h1v1h-1zM68 318h1v1h-1zM69 319h1v1h-1zM66 335h1v7h-1zM63 336h1v1h-1zM64 337h1v1h-1zM65 338h3v1h-3zM68 337h1v1h-1zM69 336h1v1h-1zM63 340h1v1h-1zM64 339h1v1h-1zM68 339h1v1h-1zM69 340h1v1h-1zM66 356h1v7h-1zM63 357h1v1h-1zM64 358h1v1h-1zM65 359h3v1h-3zM68 358h1v1h-1zM69 357h1v1h-1zM63 361h1v1h-1zM64 360h1v1h-1zM68 360h1v1h-1zM69 361h1v1h-1zM66 377h1v7h-1zM63 378h1v1h-1zM64 379h1v1h-1zM65 380h3v1h-3zM68 379h1v1h-1zM69 378h1v1h-1zM63 382h1v1h-1zM64 381h1v1h-1zM68 381h1v1h-1zM69 382h1v1h-1zM66 398h1v7h-1zM63 399h1v1h-1zM64 400h1v1h-1zM65 401h3v1h-3zM68 400h1v1h-1zM69 399h1v1h-1zM63 403h1v1h-1zM64 402h1v1h-1zM68 402h1v1h-1zM69 403h1v1h-1zM66 419h1v7h-1zM63 420h1v1h-1zM64 421h1v1h-1zM65 422h3v1h-3zM68 421h1v1h-1zM69 420h1v1h-1zM63 424h1v1h-1zM64 423h1v1h-1zM68 423h1v1h-1zM69 424h1v1h-1zM66 440h1v7h-1zM63 441h1v1h-1zM64 442h1v1h-1zM65 443h3v1h-3zM68 442h1v1h-1zM69 441h1v1h-1zM63 445h1v1h-1zM64 444h1v1h-1zM68 444h1v1h-1zM69 445h1v1h-1zM66 461h1v7h-1zM63 462h1v1h-1zM64 463h1v1h-1zM65 464h3v1h-3zM68 463h1v1h-1zM69 462h1v1h-1zM63 466h1v1h-1zM64 465h1v1h-1zM68 465h1v1h-1zM69 466h1v1h-1zM66 482h1v7h-1zM63 483h1v1h-1zM64 484h1v1h-1zM65 485h3v1h-3zM68 484h1v1h-1zM69 483h1v1h-1zM63 487h1v1h-1zM64 486h1v1h-1zM68 486h1v1h-1zM69 487h1v1h-1zM66 503h1v7h-1zM63 504h1v1h-1zM64 505h1v1h-1zM65 506h3v1h-3zM68 505h1v1h-1zM69 504h1v1h-1zM63 508h1v1h-1zM64 507h1v1h-1zM68 507h1v1h-1zM69 508h1v1h-1zM66 524h1v7h-1zM63 525h1v1h-1zM64 526h1v1h-1zM65 527h3v1h-3zM68 526h1v1h-1zM69 525h1v1h-1zM63 529h1v1h-1zM64 528h1v1h-1zM68 528h1v1h-1zM69 529h1v1h-1zM66 545h1v7h-1zM63 546h1v1h-1zM64 547h1v1h-1zM65 548h3v1h-3zM68 547h1v1h-1zM69 546h1v1h-1zM63 550h1v1h-1zM64 549h1v1h-1zM68 549h1v1h-1zM69 550h1v1h-1zM66 566h1v7h-1zM63 567h1v1h-1zM64 568h1v1h-1zM65 569h3v1h-3zM68 568h1v1h-1zM69 567h1v1h-1zM63 571h1v1h-1zM64 570h1v1h-1zM68 570h1v1h-1zM69 571h1v1h-1z" fill="#000"/></svg>
<div class="a" style="left:58px;top:35px;width:1px;height:546px;background:#CCCCCC"></div>
<div class="a" style="left:441px;top:35px;width:1px;height:546px;background:#CCCCCC"></div>
<div class="a" style="left:510px;top:35px;width:1px;height:546px;background:#CCCCCC"></div>
<div class="a" style="left:560px;top:35px;width:1px;height:546px;background:#CCCCCC"></div>
<div class="a" style="left:641px;top:35px;width:1px;height:546px;background:#CCCCCC"></div>
<div class="a" style="left:722px;top:35px;width:1px;height:546px;background:#CCCCCC"></div>
<div class="a" style="left:803px;top:35px;width:1px;height:546px;background:#CCCCCC"></div>
<div class="a" style="left:884px;top:35px;width:1px;height:546px;background:#CCCCCC"></div>
<div class="a" style="left:945px;top:35px;width:1px;height:546px;background:#CCCCCC"></div>
<div class="a" style="left:442px;top:560px;width:68px;height:20px;border:1px dotted #111"></div>
</div>
<div class="a" style="left:1001px;top:65px;width:17px;height:582px;background:linear-gradient(to right,#F0EFEA,#FCFCF8 60%,#FEFEFB)"></div>
<div class="a" style="left:1018px;top:65px;width:1px;height:600px;background:#ECE9D8"></div>
<div class="a" style="left:1002px;top:66px;width:16px;height:16px;border:1px solid #fff;border-radius:2px;background:linear-gradient(135deg,#C8D8FC 0%,#B8CCF6 60%,#A8BEEE 100%)"></div>
<svg class="a" style="left:0;top:0" width="1024" height="734"><path d="M1006.0 76.0L1010.0 72.0L1014.0 76.0" fill="none" stroke="#4D6185" stroke-width="2"/></svg>
<div class="a" style="left:1002px;top:85px;width:16px;height:8px;border:1px solid #fff;border-radius:2px;background:linear-gradient(135deg,#C8D8FC 0%,#B8CCF6 60%,#A8BEEE 100%)"></div>
<div class="a" style="left:1002px;top:631px;width:16px;height:16px;border:1px solid #fff;border-radius:2px;background:linear-gradient(135deg,#C8D8FC 0%,#B8CCF6 60%,#A8BEEE 100%)"></div>
<svg class="a" style="left:0;top:0" width="1024" height="734"><path d="M1006.0 637.0L1010.0 641.0L1014.0 637.0" fill="none" stroke="#4D6185" stroke-width="2"/></svg>
<div class="a" style="left:6px;top:647px;width:995px;height:18px;background:linear-gradient(to bottom,#F3F1EC,#FEFEFB 30%,#FEFEFB 70%,#F0EEE6)"></div>
<div class="a" style="left:1001px;top:647px;width:18px;height:18px;background:#F3F1EC"></div>
<div class="a" style="left:6px;top:649px;width:16px;height:16px;border:1px solid #fff;border-radius:2px;background:linear-gradient(135deg,#C8D8FC 0%,#B8CCF6 60%,#A8BEEE 100%)"></div>
<svg class="a" style="left:0;top:0" width="1024" height="734"><path d="M16.0 653.0L12.0 657.0L16.0 661.0" fill="none" stroke="#4D6185" stroke-width="2"/></svg>
<div class="a" style="left:23px;top:649px;width:17px;height:16px;border:1px solid #fff;border-radius:2px;background:linear-gradient(135deg,#C8D8FC 0%,#B8CCF6 60%,#A8BEEE 100%)"></div>
<div class="a" style="left:27px;top:653px;width:1px;height:8px;background:#8EA4DC"></div>
<div class="a" style="left:28px;top:654px;width:1px;height:8px;background:#F4F8FF"></div>
<div class="a" style="left:29px;top:653px;width:1px;height:8px;background:#8EA4DC"></div>
<div class="a" style="left:30px;top:654px;width:1px;height:8px;background:#F4F8FF"></div>
<div class="a" style="left:31px;top:653px;width:1px;height:8px;background:#8EA4DC"></div>
<div class="a" style="left:32px;top:654px;width:1px;height:8px;background:#F4F8FF"></div>
<div class="a" style="left:33px;top:653px;width:1px;height:8px;background:#8EA4DC"></div>
<div class="a" style="left:34px;top:654px;width:1px;height:8px;background:#F4F8FF"></div>
<div class="a" style="left:985px;top:649px;width:16px;height:16px;border:1px solid #fff;border-radius:2px;background:linear-gradient(135deg,#C8D8FC 0%,#B8CCF6 60%,#A8BEEE 100%)"></div>
<svg class="a" style="left:0;top:0" width="1024" height="734"><path d="M991.0 653.0L995.0 657.0L991.0 661.0" fill="none" stroke="#4D6185" stroke-width="2"/></svg>
<div class="t n" style="left:9px;top:678px">Szukaj wg nazwy, numeru towaru:</div>
<div class="a" style="left:196px;top:673px;width:817px;height:20px;background:#fff;border-top:1px solid #DCD8C8;border-left:1px solid #ACA899;border-right:1px solid #fff;border-bottom:1px solid #fff;box-shadow:inset 1px 1px 0 #716F64"></div>
<div class="a" style="left:4px;top:699px;width:1016px;height:1px;background:#ACA899"></div>
<div class="a" style="left:4px;top:700px;width:1016px;height:1px;background:#fff"></div>
<div class="a" style="left:4px;top:700px;width:1px;height:30px;background:#fff"></div>
<div class="a" style="left:1018px;top:699px;width:1px;height:30px;background:#ACA899"></div>
<div class="a" style="left:5px;top:728px;width:1013px;height:1px;background:#D0CCC0"></div>
<div class="a" style="left:4px;top:729px;width:1016px;height:1px;background:#fff"></div>
<div class="a" style="left:1019px;top:30px;width:1px;height:700px;background:#fff"></div>
<div class="a" style="left:9px;top:704px;width:88px;height:21px;background:#ECE9D8;border-top:1px solid #fff;border-left:1px solid #fff;border-right:1px solid #000;border-bottom:1px solid #000;box-shadow:inset -1px -1px 0 #ACA899"></div>
<div class="t n" style="left:9px;top:709px;width:88px;text-align:center">[Spacja] Sortuj</div>
<div class="a" style="left:102px;top:704px;width:88px;height:21px;background:#ECE9D8;border-top:1px solid #fff;border-left:1px solid #fff;border-right:1px solid #000;border-bottom:1px solid #000;box-shadow:inset -1px -1px 0 #ACA899"></div>
<div class="t n" style="left:102px;top:709px;width:88px;text-align:center">[F7] Filtr</div>
<div class="a" style="left:195px;top:704px;width:89px;height:21px;background:#ECE9D8;border-top:1px solid #fff;border-left:1px solid #fff;border-right:1px solid #000;border-bottom:1px solid #000;box-shadow:inset -1px -1px 0 #ACA899"></div>
<div class="t n" style="left:205px;top:709px">[F9] Wykres</div>
<div class="a" style="left:289px;top:704px;width:89px;height:21px;background:#ECE9D8;border-top:1px solid #fff;border-left:1px solid #fff;border-right:1px solid #000;border-bottom:1px solid #000;box-shadow:inset -1px -1px 0 #ACA899"></div>
<div class="t n" style="left:289px;top:709px;width:89px;text-align:center">[F10] Wydruk</div>
<div class="a" style="left:383px;top:704px;width:89px;height:21px;background:#ECE9D8;border-top:1px solid #fff;border-left:1px solid #fff;border-right:1px solid #000;border-bottom:1px solid #000;box-shadow:inset -1px -1px 0 #ACA899"></div>
<div class="t n" style="left:383px;top:709px;width:89px;text-align:center">[ESC] Zamknij</div>
<div class="a" style="left:267px;top:713px;width:0;height:0;border-left:4px solid transparent;border-right:4px solid transparent;border-top:4px solid #000"></div>
</body></html>
